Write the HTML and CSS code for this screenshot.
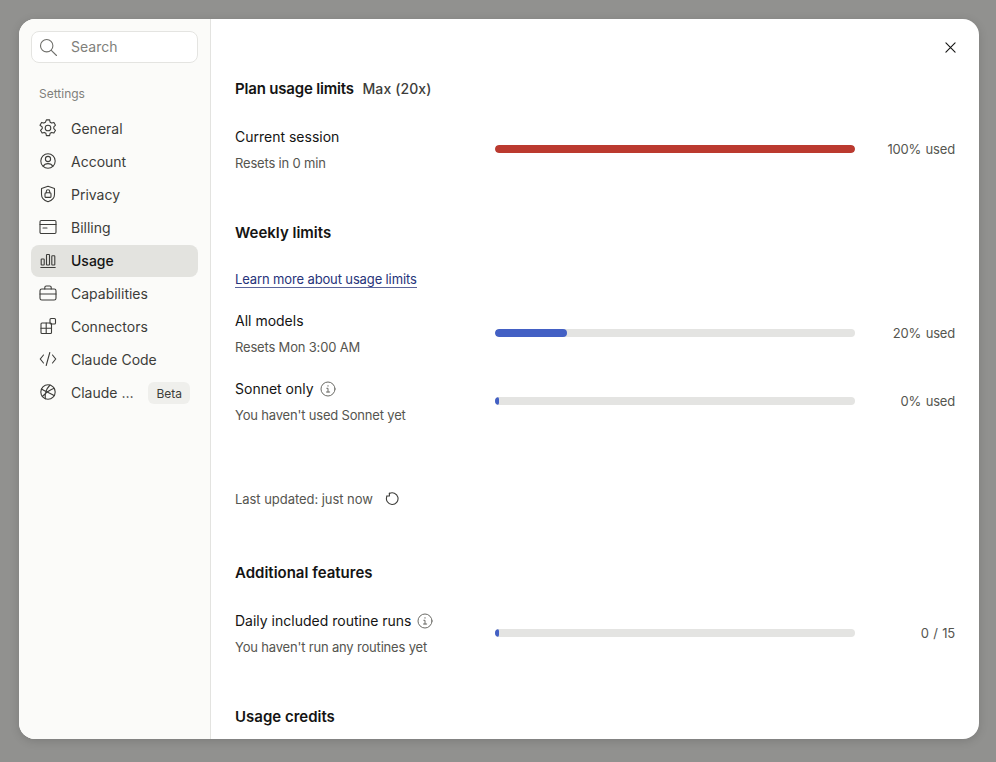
FILE: index.html
```html
<!DOCTYPE html>
<html lang="en">
<head>
    <meta charset="UTF-8">
    <meta name="viewport" content="width=device-width, initial-scale=1.0">
    <title>Usage</title>
    <link rel="stylesheet" href="styles.css">
</head>
<body>

    <div class="modal">
        <aside class="sidebar">
            <div class="search-box">
                <svg class="icon" viewBox="0 0 20 20"><circle cx="8.7" cy="8.7" r="6.2"/><path d="M13.3 13.3l5.2 5.2"/></svg>
                <span>Search</span>
            </div>
            <div class="sidebar-label">Settings</div>
            <nav class="nav-list">
                <a class="nav-item">
                    <svg class="icon" viewBox="0 0 20 20"><circle cx="10" cy="10" r="2.8"/><path d="M8.4 1.9h3.2l.5 2.3 1.6.9 2.2-.7 1.6 2.8-1.7 1.600v1.900l1.700 1.600-1.600 2.800-2.200-.7-1.600.9-.5 2.300H8.400l-.5-2.300-1.600-.9-2.200.7-1.600-2.800 1.700-1.600V8.900L2 7.200l1.600-2.800 2.200.7 1.600-.9z" stroke-linejoin="round"/></svg>
                    General
                </a>
                <a class="nav-item">
                    <svg class="icon" viewBox="0 0 20 20"><circle cx="10" cy="10" r="7.2"/><circle cx="10" cy="8" r="2.600"/><path d="M5.200 15.300c1-1.900 2.800-2.700 4.800-2.700s3.800.8 4.800 2.700"/></svg>
                    Account
                </a>
                <a class="nav-item">
                    <svg class="icon" viewBox="0 0 20 20"><path d="M10 2.300l6.500 2.200v6c0 3.800-3 6.100-6.500 7.200-3.500-1.100-6.500-3.400-6.500-7.200v-6z" stroke-linejoin="round"/><rect x="7" y="8.800" width="6" height="4.600" rx="1"/><path d="M8.300 8.800V7.500a1.700 1.700 0 0 1 3.400 0v1.300"/></svg>
                    Privacy
                </a>
                <a class="nav-item">
                    <svg class="icon" viewBox="0 0 20 20"><rect x="2" y="3.500" width="16" height="13" rx="1.200"/><path d="M2 7.500h16M5 11h4"/></svg>
                    Billing
                </a>
                <a class="nav-item active">
                    <svg class="icon" viewBox="0 0 20 20"><rect x="3.200" y="9" width="3" height="6" rx=".6"/><rect x="8.500" y="4.500" width="3" height="10.500" rx=".6"/><rect x="13.800" y="5.800" width="3" height="9.200" rx=".6"/><path d="M2.800 17.500h14.400"/></svg>
                    Usage
                </a>
                <a class="nav-item">
                    <svg class="icon" viewBox="0 0 20 20"><rect x="2" y="6" width="16" height="11" rx="1.800"/><path d="M6.800 6V4.500a1.500 1.500 0 0 1 1.500-1.500h3.400a1.500 1.500 0 0 1 1.500 1.500V6M2 11h16"/></svg>
                    Capabilities
                </a>
                <a class="nav-item">
                    <svg class="icon" viewBox="0 0 20 20"><rect x="3" y="7" width="10.500" height="10.500" rx="1"/><path d="M8.200 7v10.500M3 12.200h10.500"/><rect x="12" y="2.500" width="5.500" height="5.500" rx="1"/></svg>
                    Connectors
                </a>
                <a class="nav-item">
                    <svg class="icon" viewBox="0 0 20 20"><path d="M5.500 6L2.300 10l3.200 4M14.500 6l3.200 4-3.200 4M11.800 3.500L8.200 16.500"/></svg>
                    Claude Code
                </a>
                <a class="nav-item">
                    <svg class="icon" viewBox="0 0 20 20"><circle cx="10" cy="10" r="7.200"/><path d="M3.500 7c4.200 2.600 8.900 4 13 6.700M12 3C8.500 6.700 6.700 12 7.300 16.700M4.300 14.500c3.400-3.600 7.700-7 12-8.300"/></svg>
                    <span class="nav-text">Claude …</span>
                    <span class="badge">Beta</span>
                </a>
            </nav>
        </aside>

        <main class="content">
            <button class="close-btn">
                <svg viewBox="0 0 12 12"><path d="M1 1l10 10M11 1L1 11"/></svg>
            </button>

            <section class="section-plan">
                <h2 class="section-title">Plan usage limits <span class="plan-name">Max (20x)</span></h2>
                <div class="usage-row">
                    <div class="usage-label">
                        <div class="usage-name">Current session</div>
                        <div class="usage-sub">Resets in 0 min</div>
                    </div>
                    <div class="bar"><div class="bar-fill bar-red" style="width: 100%"></div></div>
                    <div class="usage-value">100% used</div>
                </div>
            </section>

            <section class="section-weekly">
                <h2 class="section-title">Weekly limits</h2>
                <a class="learn-link">Learn more about usage limits</a>
                <div class="usage-row">
                    <div class="usage-label">
                        <div class="usage-name">All models</div>
                        <div class="usage-sub">Resets Mon 3:00 AM</div>
                    </div>
                    <div class="bar"><div class="bar-fill" style="width: 20%"></div></div>
                    <div class="usage-value">20% used</div>
                </div>
                <div class="usage-row">
                    <div class="usage-label">
                        <div class="usage-name">Sonnet only
                            <svg class="info-icon" viewBox="0 0 16 16"><circle cx="8" cy="8" r="7"/><path d="M6.800 7.300H8v3.700M6.500 11h3.200M8 4.600v.6"/></svg>
                        </div>
                        <div class="usage-sub">You haven't used Sonnet yet</div>
                    </div>
                    <div class="bar"><div class="bar-fill bar-min" style="width: 1%"></div></div>
                    <div class="usage-value">0% used</div>
                </div>
                <div class="last-updated">
                    <span>Last updated: just now</span>
                    <svg class="refresh-icon" viewBox="0 0 14 14"><path d="M4.200 1.700A5.800 5.800 0 1 1 1.800 4.600M4.400 1v3H1.600"/></svg>
                </div>
            </section>

            <section class="section-extra">
                <h2 class="section-title">Additional features</h2>
                <div class="usage-row">
                    <div class="usage-label">
                        <div class="usage-name">Daily included routine runs
                            <svg class="info-icon" viewBox="0 0 16 16"><circle cx="8" cy="8" r="7"/><path d="M6.800 7.300H8v3.700M6.500 11h3.200M8 4.600v.6"/></svg>
                        </div>
                        <div class="usage-sub">You haven't run any routines yet</div>
                    </div>
                    <div class="bar"><div class="bar-fill bar-min" style="width: 1%"></div></div>
                    <div class="usage-value">0 / 15</div>
                </div>
            </section>

            <section class="section-credits">
                <h2 class="section-title">Usage credits</h2>
            </section>
        </main>
    </div>

</body>
</html>
```

FILE: styles.css
```css
* {
    box-sizing: border-box;
}
body {
    font-family: Inter, "Noto Sans", sans-serif;
    background-color: #91918f;
    margin: 0;
    padding: 19px;
    height: 762px;
    overflow: hidden;
    color: #141413;
}
.modal {
    width: 960px;
    height: 720px;
    display: flex;
    background-color: #fff;
    border-radius: 16px;
    overflow: hidden;
    box-shadow: 0 2px 10px rgba(0, 0, 0, 0.15);
}

/* sidebar */
.sidebar {
    width: 192px;
    flex-shrink: 0;
    background-color: #fbfbf9;
    border-right: 1px solid #e3e3e0;
    padding: 12px 12px 0;
}
.search-box {
    height: 32px;
    display: flex;
    align-items: center;
    gap: 13px;
    padding-left: 6px;
    padding-bottom: 1px;
    background-color: #fff;
    border: 1px solid #e4e4e1;
    border-radius: 8px;
    font-size: 14px;
    color: #7f7f7b;
}
.search-box .icon {
    stroke: #6f6f6b;
}
.icon {
    width: 20px;
    height: 20px;
    flex-shrink: 0;
    fill: none;
    stroke: #3d3d3a;
    stroke-width: 1.1;
    stroke-linecap: round;
}
.sidebar-label {
    font-size: 12px;
    color: #7f7f7b;
    padding-left: 8px;
    margin-top: 23px;
    line-height: 16px;
}
.nav-list {
    display: flex;
    flex-direction: column;
    gap: 1px;
    margin-top: 11px;
}
.nav-item {
    height: 32px;
    display: flex;
    align-items: center;
    gap: 13px;
    padding-left: 7px;
    padding-bottom: 2px;
    border-radius: 8px;
    font-size: 14px;
    color: #3d3d3a;
}
.nav-item.active {
    background-color: #e3e3df;
    color: #141413;
    font-weight: 500;
}
.nav-text {
    flex: 1;
    min-width: 0;
    white-space: nowrap;
}
.badge {
    height: 22px;
    display: flex;
    align-items: center;
    padding: 0 8px;
    margin: 2px 8px 0 0;
    background-color: #efefec;
    border-radius: 6px;
    font-size: 12px;
    color: #3d3d3a;
}

/* main panel */
.content {
    flex: 1;
    min-width: 0;
    position: relative;
    padding: 0 24px;
    overflow: hidden;
}
.close-btn {
    position: absolute;
    top: 23px;
    right: 23px;
    width: 11px;
    height: 11px;
    padding: 0;
    border: 0;
    background: none;
}
.close-btn svg {
    display: block;
    width: 11px;
    height: 11px;
    fill: none;
    stroke: #141413;
    stroke-width: 1.2;
    stroke-linecap: round;
}
.section-title {
    margin: 0;
    font-size: 15px;
    line-height: 20px;
    font-weight: 600;
    color: #141413;
}
.section-plan .section-title {
    letter-spacing: -0.18px;
}
.plan-name {
    margin-left: 5px;
    font-size: 14px;
    font-weight: 500;
    letter-spacing: 0.1px;
    color: #3d3d3a;
}
.section-plan {
    padding-top: 60px;
}
.section-plan .usage-row {
    margin-top: 22px;
}
.section-weekly {
    margin-top: 46px;
}
.section-extra {
    margin-top: 54px;
}
.section-extra .usage-row {
    margin-top: 22px;
}
.section-credits {
    margin-top: 46px;
}
.learn-link {
    display: inline-block;
    margin-top: 28px;
    font-size: 13px;
    line-height: 16px;
    letter-spacing: -0.13px;
    color: #26337a;
    border-bottom: 1px solid #5b659b;
}
.usage-row {
    display: flex;
    align-items: center;
    margin-top: 12px;
    height: 56px;
}
.learn-link + .usage-row {
    margin-top: 17px;
}
.usage-label {
    width: 260px;
    flex-shrink: 0;
}
.usage-name {
    font-size: 14px;
    line-height: 20px;
    display: flex;
    align-items: center;
    gap: 6px;
    color: #141413;
}
.usage-sub {
    font-size: 13px;
    line-height: 18px;
    letter-spacing: -0.18px;
    margin-top: 7px;
    color: #55554f;
}
.info-icon {
    width: 16px;
    height: 16px;
    fill: none;
    stroke: #6b6b66;
    stroke-width: 1;
    stroke-linecap: round;
}
.bar {
    width: 360px;
    height: 8px;
    flex-shrink: 0;
    background-color: #e4e4e2;
    border-radius: 4px;
    overflow: hidden;
}
.bar-fill {
    height: 100%;
    background-color: #4360c4;
    border-radius: 4px;
}
.bar-red {
    background-color: #bb3a2f;
}
.bar-min {
    min-width: 3px;
}
.usage-value {
    flex: 1;
    text-align: right;
    font-size: 13px;
    letter-spacing: -0.18px;
    word-spacing: 1px;
    color: #55554f;
}
.last-updated {
    display: flex;
    align-items: center;
    gap: 12px;
    margin-top: 60px;
    font-size: 13px;
    line-height: 20px;
    letter-spacing: -0.05px;
    color: #55554f;
}
.refresh-icon {
    width: 14px;
    height: 14px;
    fill: none;
    stroke: #3d3d3a;
    stroke-width: 1.1;
    stroke-linecap: round;
    stroke-linejoin: round;
}
```
